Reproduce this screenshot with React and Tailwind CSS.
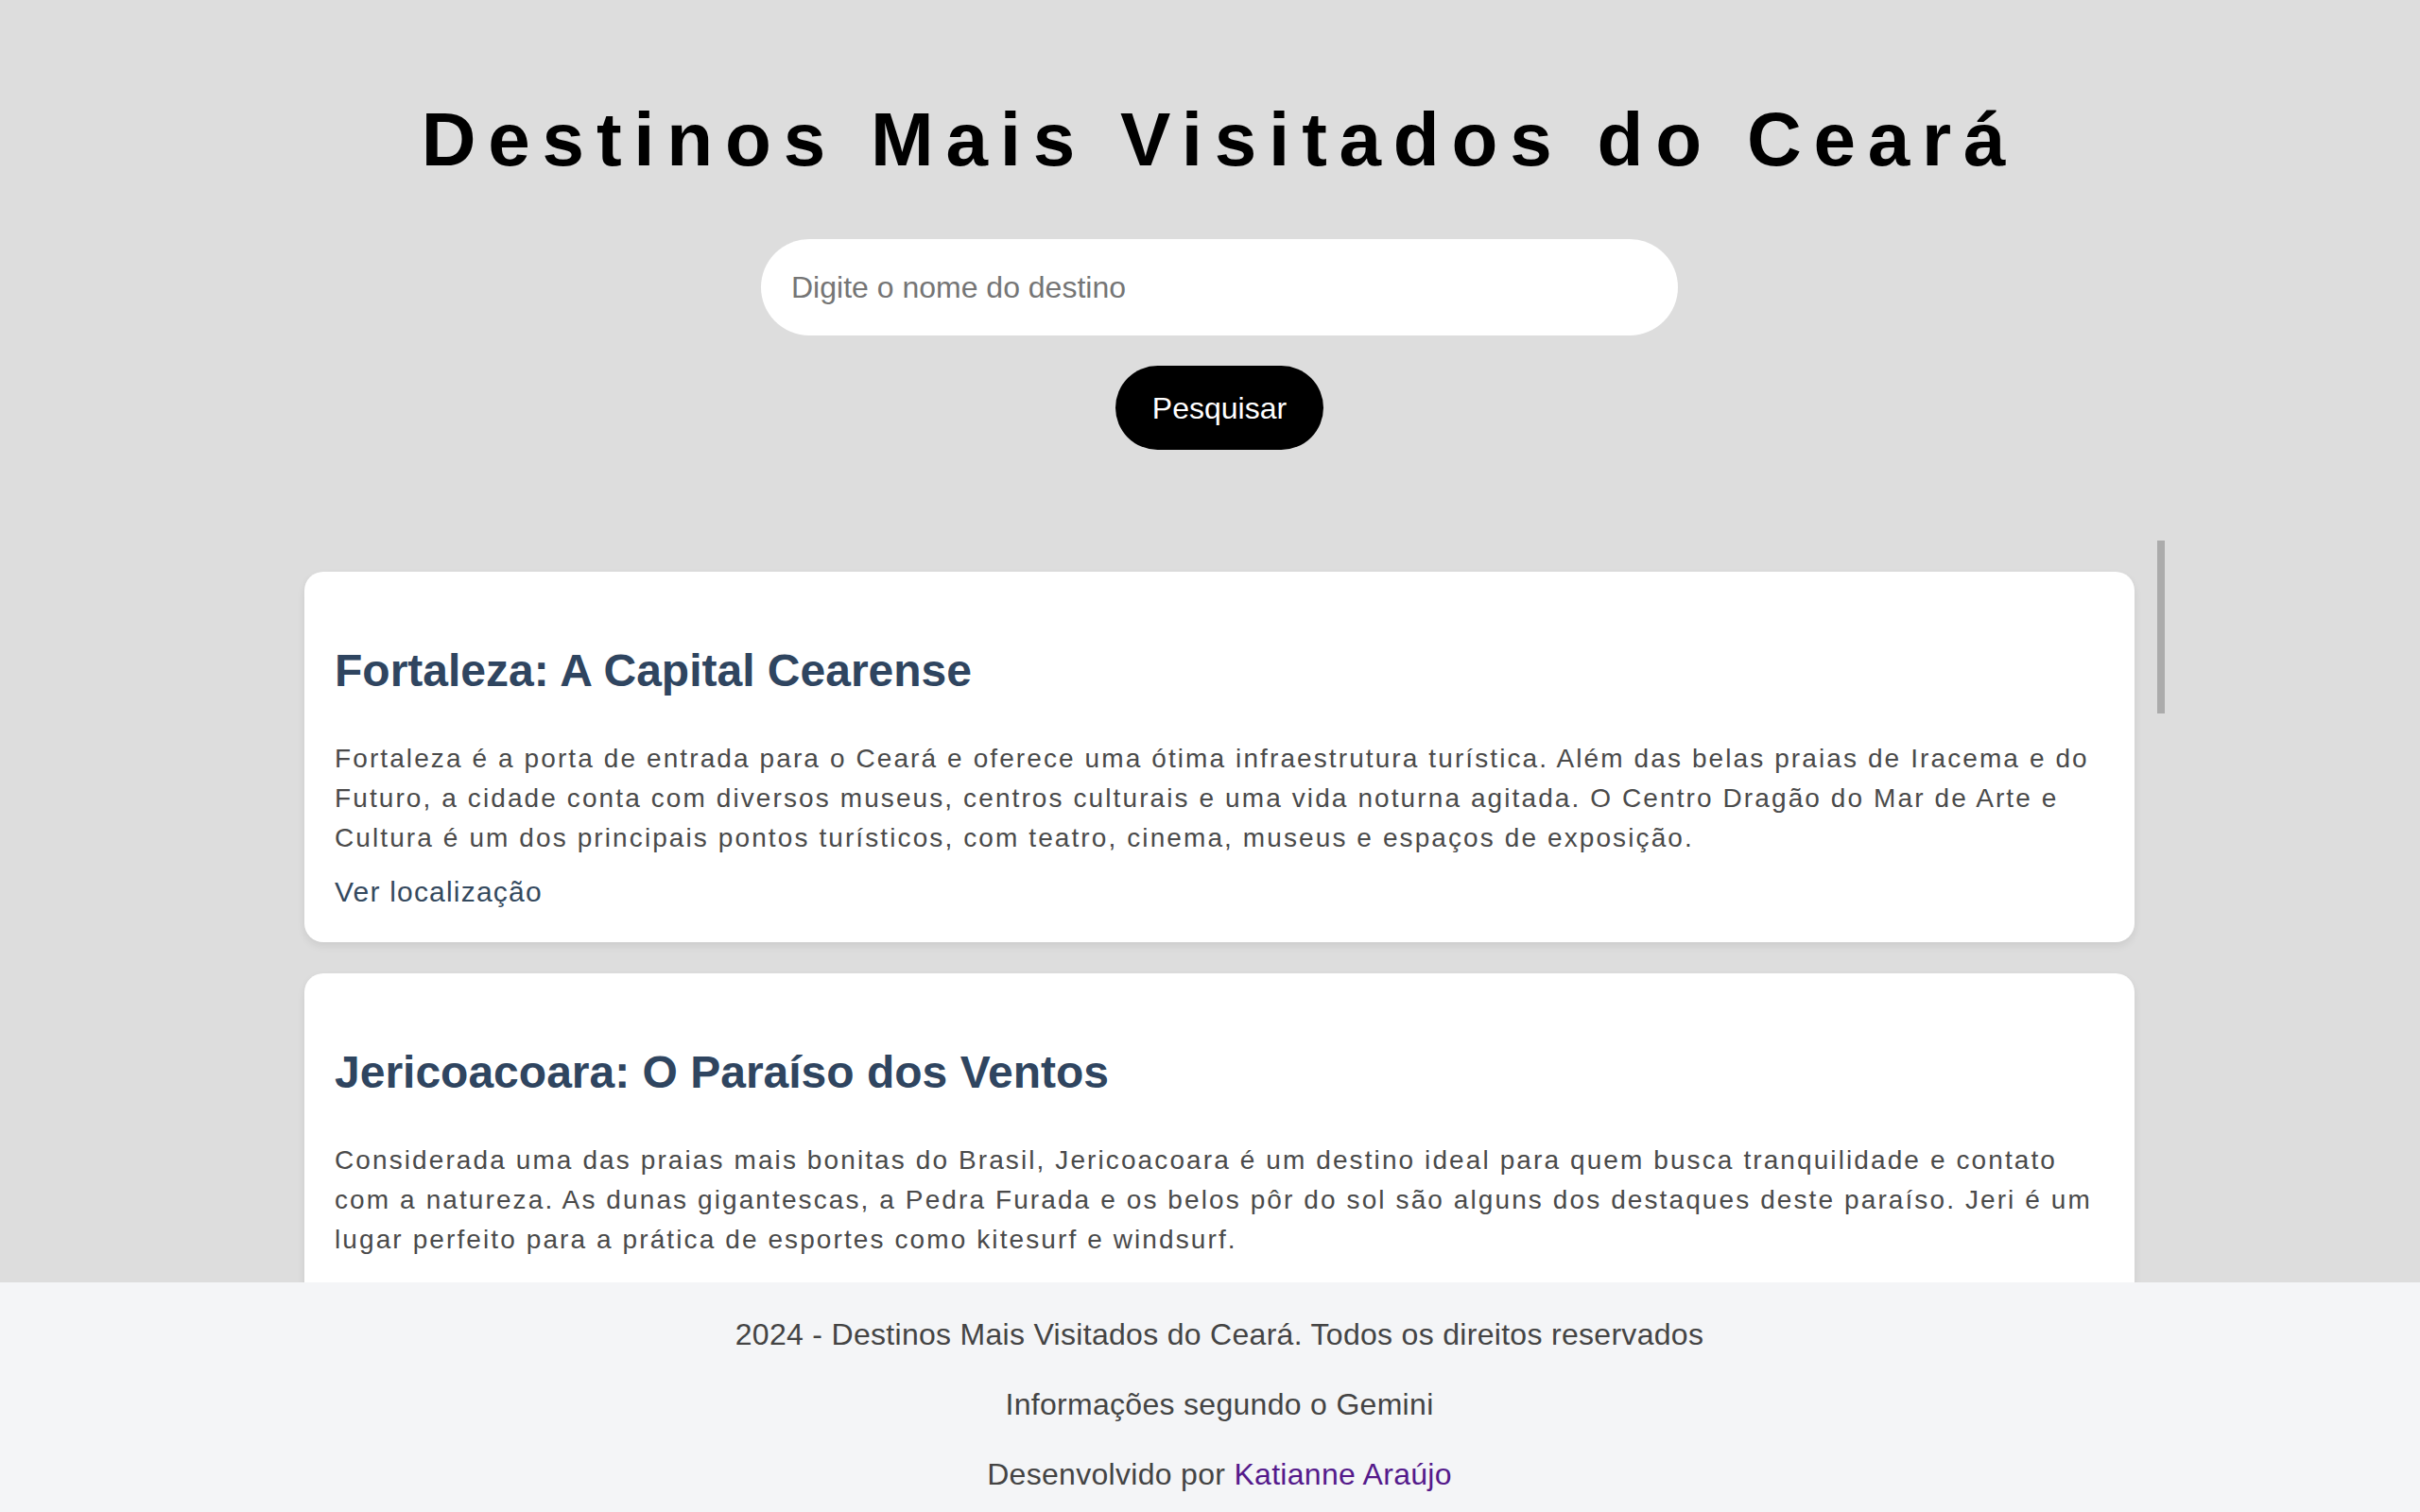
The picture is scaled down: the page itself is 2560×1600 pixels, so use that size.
import React from "react";

const destinos = [
  {
    titulo: "Fortaleza: A Capital Cearense",
    texto:
      "Fortaleza é a porta de entrada para o Ceará e oferece uma ótima infraestrutura turística. Além das belas praias de Iracema e do Futuro, a cidade conta com diversos museus, centros culturais e uma vida noturna agitada. O Centro Dragão do Mar de Arte e Cultura é um dos principais pontos turísticos, com teatro, cinema, museus e espaços de exposição.",
  },
  {
    titulo: "Jericoacoara: O Paraíso dos Ventos",
    texto:
      "Considerada uma das praias mais bonitas do Brasil, Jericoacoara é um destino ideal para quem busca tranquilidade e contato com a natureza. As dunas gigantescas, a Pedra Furada e os belos pôr do sol são alguns dos destaques deste paraíso. Jeri é um lugar perfeito para a prática de esportes como kitesurf e windsurf.",
  },
  {
    titulo: "Canoa Quebrada: Falésias e Dunas",
    texto:
      "Famosa por suas falésias avermelhadas e pela famosa lua com estrela esculpida nas rochas, Canoa Quebrada encanta com suas dunas, passeios de buggy e a animada Broadway, rua repleta de bares, restaurantes e lojas de artesanato local, ideal para aproveitar a noite.",
  },
  {
    titulo: "Cumbuco: Aventura à Beira-Mar",
    texto:
      "A poucos quilômetros de Fortaleza, Cumbuco é conhecida pelos passeios de buggy nas dunas, pelas lagoas de água doce e pelo esquibunda. A praia também atrai praticantes de kitesurf do mundo inteiro, graças aos ventos constantes durante boa parte do ano.",
  },
  {
    titulo: "Guaramiranga: O Charme da Serra",
    texto:
      "Localizada no Maciço de Baturité, Guaramiranga oferece clima ameno, trilhas em meio à Mata Atlântica e cachoeiras. A cidade é famosa pelo Festival de Jazz & Blues, pela culinária regional e pelas pousadas aconchegantes que recebem visitantes durante todo o ano.",
  },
  {
    titulo: "Lagoinha: A Praia das Três Paisagens",
    texto:
      "Lagoinha reúne coqueirais, dunas e falésias em um só lugar. Suas águas calmas e mornas são ideais para banho, e a lagoa formada entre as dunas é um dos cenários mais fotografados do litoral oeste cearense.",
  },
  {
    titulo: "Quixadá: Monólitos do Sertão",
    texto:
      "Conhecida pelos impressionantes monólitos que se erguem no sertão, Quixadá é destino de aventura, com voo livre, rapel e escalada. O Açude do Cedro e a Pedra da Galinha Choca são atrações imperdíveis para quem visita a região central do estado.",
  },
  {
    titulo: "Ubajara: Grutas e Bondinho",
    texto:
      "O Parque Nacional de Ubajara, na Serra da Ibiapaba, impressiona com sua gruta repleta de formações calcárias, acessada por um bondinho com vista panorâmica. Trilhas, mirantes e cachoeiras completam o roteiro.",
  },
];

function Card({ titulo, texto }) {
  return (
    <div className="mb-[33px] rounded-[20px] bg-white px-[32px] pt-[75px] pb-[32px] shadow-[0_4px_8px_rgba(0,0,0,0.08)]">
      <h2 className="text-[48px] leading-[60px] font-bold text-[#2f4560]">{titulo}</h2>
      <p className="mt-[42px] text-[28px] leading-[42px] tracking-[2.1px] text-[#4a4a4a]">{texto}</p>
      <a href="#" className="mt-[15px] block text-[30px] leading-[42px] tracking-[1.2px] text-[#34495e]">
        Ver localização
      </a>
    </div>
  );
}

export default function App() {
  return (
    <div className="flex h-screen flex-col overflow-hidden bg-[#dddddd] font-['Liberation_Sans',Arial,sans-serif]">
      <div className="flex min-h-0 flex-1 flex-col items-center pl-[20px]">
        <h1 className="pt-[100px] text-[80px] leading-[96px] font-bold tracking-[12.8px] text-black">
          Destinos Mais Visitados do Ceará
        </h1>
        <input
          type="text"
          placeholder="Digite o nome do destino"
          className="mt-[57px] h-[102px] w-[970px] rounded-full bg-white px-[32px] text-[32px] text-black outline-none placeholder:text-[#757575]"
        />
        <button className="mt-[32px] h-[89px] w-[220px] rounded-full bg-black text-[32px] text-white">
          Pesquisar
        </button>
        <div className="relative mt-[96px] min-h-0 w-[2000px] flex-1">
          <div className="h-full overflow-y-auto pt-[33px] pl-[32px] pr-[32px] [scrollbar-width:none]">
            {destinos.map((d) => (
              <Card key={d.titulo} {...d} />
            ))}
          </div>
          <div className="absolute top-0 right-0 h-[183px] w-[8px] bg-[#ababab]" />
        </div>
      </div>
      <footer className="flex h-[243px] shrink-0 flex-col items-center gap-[32px] bg-[#f4f5f7] pt-[34px] pl-[20px] text-[32px] leading-[42px] tracking-[0.3px] text-[#444444]">
        <p>2024 - Destinos Mais Visitados do Ceará. Todos os direitos reservados</p>
        <p>Informações segundo o Gemini</p>
        <p>
          Desenvolvido por{" "}
          <a href="#" className="text-[#551a8b]">
            Katianne Araújo
          </a>
        </p>
      </footer>
    </div>
  );
}
